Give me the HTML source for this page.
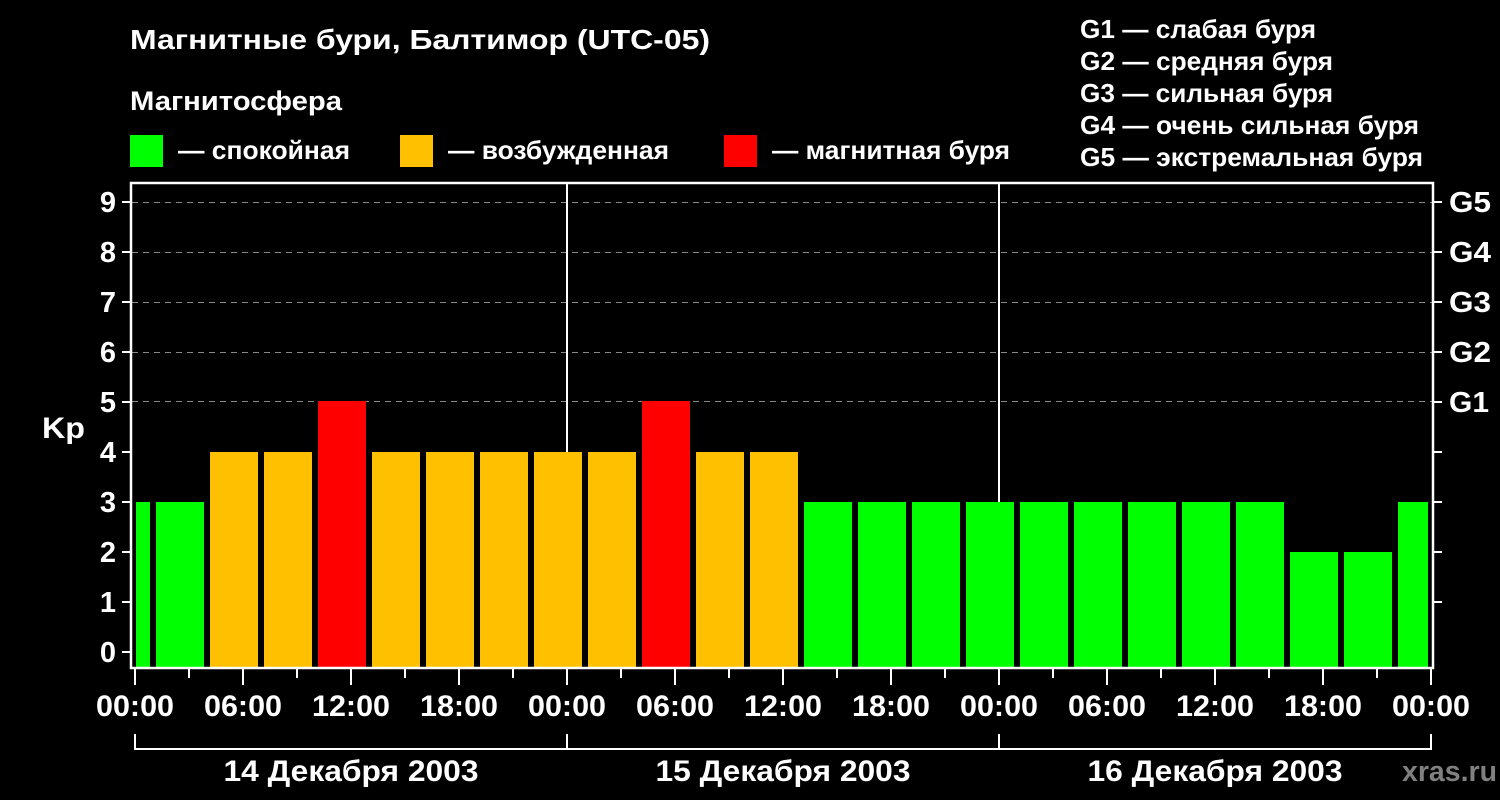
<!DOCTYPE html>
<html><head><meta charset="utf-8"><style>html,body{margin:0;padding:0;background:#000;}svg{display:block}</style></head><body>
<svg width="1500" height="800" viewBox="0 0 1500 800" xmlns="http://www.w3.org/2000/svg" font-family="Liberation Sans, Arial, sans-serif" font-weight="bold" fill="#fff">
<rect width="1500" height="800" fill="#000"/>
<text x="130" y="49" font-size="28" textLength="580" lengthAdjust="spacingAndGlyphs">Магнитные бури, Балтимор (UTC-05)</text>
<text x="130" y="110" font-size="27" textLength="212" lengthAdjust="spacingAndGlyphs">Магнитосфера</text>
<rect x="130" y="135" width="33" height="32" fill="#00ff00"/>
<text x="178" y="159" font-size="26" textLength="172" lengthAdjust="spacingAndGlyphs">— спокойная</text>
<rect x="400" y="135" width="33" height="32" fill="#ffc000"/>
<text x="448" y="159" font-size="26" textLength="221" lengthAdjust="spacingAndGlyphs">— возбужденная</text>
<rect x="724" y="135" width="33" height="32" fill="#ff0000"/>
<text x="772" y="159" font-size="26" textLength="238" lengthAdjust="spacingAndGlyphs">— магнитная буря</text>
<g font-size="26">
<text x="1080" y="38" textLength="236" lengthAdjust="spacingAndGlyphs">G1 — слабая буря</text>
<text x="1080" y="70" textLength="253" lengthAdjust="spacingAndGlyphs">G2 — средняя буря</text>
<text x="1080" y="102" textLength="253" lengthAdjust="spacingAndGlyphs">G3 — сильная буря</text>
<text x="1080" y="134" textLength="339" lengthAdjust="spacingAndGlyphs">G4 — очень сильная буря</text>
<text x="1080" y="166" textLength="343" lengthAdjust="spacingAndGlyphs">G5 — экстремальная буря</text>
</g>
<g stroke="#888" stroke-width="1" stroke-dasharray="6,5">
<line x1="132" y1="202.5" x2="1432" y2="202.5"/>
<line x1="132" y1="252.5" x2="1432" y2="252.5"/>
<line x1="132" y1="302.5" x2="1432" y2="302.5"/>
<line x1="132" y1="352.5" x2="1432" y2="352.5"/>
<line x1="132" y1="401.5" x2="1432" y2="401.5"/>
</g>
<g>
<rect x="136" y="502" width="14" height="166" fill="#00ff00"/>
<rect x="156" y="502" width="48" height="166" fill="#00ff00"/>
<rect x="210" y="452" width="48" height="216" fill="#ffc000"/>
<rect x="264" y="452" width="48" height="216" fill="#ffc000"/>
<rect x="318" y="401" width="48" height="267" fill="#ff0000"/>
<rect x="372" y="452" width="48" height="216" fill="#ffc000"/>
<rect x="426" y="452" width="48" height="216" fill="#ffc000"/>
<rect x="480" y="452" width="48" height="216" fill="#ffc000"/>
<rect x="534" y="452" width="48" height="216" fill="#ffc000"/>
<rect x="588" y="452" width="48" height="216" fill="#ffc000"/>
<rect x="642" y="401" width="48" height="267" fill="#ff0000"/>
<rect x="696" y="452" width="48" height="216" fill="#ffc000"/>
<rect x="750" y="452" width="48" height="216" fill="#ffc000"/>
<rect x="804" y="502" width="48" height="166" fill="#00ff00"/>
<rect x="858" y="502" width="48" height="166" fill="#00ff00"/>
<rect x="912" y="502" width="48" height="166" fill="#00ff00"/>
<rect x="966" y="502" width="48" height="166" fill="#00ff00"/>
<rect x="1020" y="502" width="48" height="166" fill="#00ff00"/>
<rect x="1074" y="502" width="48" height="166" fill="#00ff00"/>
<rect x="1128" y="502" width="48" height="166" fill="#00ff00"/>
<rect x="1182" y="502" width="48" height="166" fill="#00ff00"/>
<rect x="1236" y="502" width="48" height="166" fill="#00ff00"/>
<rect x="1290" y="552" width="48" height="116" fill="#00ff00"/>
<rect x="1344" y="552" width="48" height="116" fill="#00ff00"/>
<rect x="1398" y="502" width="30" height="166" fill="#00ff00"/>
</g>
<g stroke="#fff" stroke-width="2">
<line x1="567" y1="183" x2="567" y2="452"/>
<line x1="999" y1="183" x2="999" y2="502"/>
</g>
<rect x="131" y="183" width="1302" height="485" fill="none" stroke="#fff" stroke-width="2.5"/>
<g stroke="#fff" stroke-width="2">
<line x1="122" y1="652" x2="131" y2="652"/><line x1="122" y1="602" x2="131" y2="602"/>
<line x1="122" y1="552" x2="131" y2="552"/><line x1="122" y1="502" x2="131" y2="502"/>
<line x1="122" y1="452" x2="131" y2="452"/><line x1="122" y1="402" x2="131" y2="402"/>
<line x1="122" y1="352" x2="131" y2="352"/><line x1="122" y1="302" x2="131" y2="302"/>
<line x1="122" y1="252" x2="131" y2="252"/><line x1="122" y1="202" x2="131" y2="202"/>
<line x1="1433" y1="602" x2="1442" y2="602"/><line x1="1433" y1="552" x2="1442" y2="552"/>
<line x1="1433" y1="502" x2="1442" y2="502"/><line x1="1433" y1="452" x2="1442" y2="452"/>
<line x1="1433" y1="402" x2="1442" y2="402"/><line x1="1433" y1="352" x2="1442" y2="352"/>
<line x1="1433" y1="302" x2="1442" y2="302"/><line x1="1433" y1="252" x2="1442" y2="252"/>
<line x1="1433" y1="202" x2="1442" y2="202"/>
</g>
<g font-size="29" text-anchor="end">
<text x="116" y="662">0</text><text x="116" y="612">1</text><text x="116" y="562">2</text>
<text x="116" y="512">3</text><text x="116" y="462">4</text><text x="116" y="412">5</text>
<text x="116" y="362">6</text><text x="116" y="312">7</text><text x="116" y="262">8</text>
<text x="116" y="212">9</text>
</g>
<text x="42" y="438" font-size="30" textLength="43" lengthAdjust="spacingAndGlyphs">Kp</text>
<g font-size="29">
<text x="1449" y="412" textLength="40" lengthAdjust="spacingAndGlyphs">G1</text><text x="1449" y="362" textLength="42" lengthAdjust="spacingAndGlyphs">G2</text><text x="1449" y="312" textLength="42" lengthAdjust="spacingAndGlyphs">G3</text>
<text x="1449" y="262" textLength="42" lengthAdjust="spacingAndGlyphs">G4</text><text x="1449" y="212" textLength="42" lengthAdjust="spacingAndGlyphs">G5</text>
</g>
<g stroke="#fff" stroke-width="2">
<line x1="135" y1="668" x2="135" y2="685"/><line x1="189" y1="668" x2="189" y2="678"/>
<line x1="243" y1="668" x2="243" y2="685"/><line x1="297" y1="668" x2="297" y2="678"/>
<line x1="351" y1="668" x2="351" y2="685"/><line x1="405" y1="668" x2="405" y2="678"/>
<line x1="459" y1="668" x2="459" y2="685"/><line x1="513" y1="668" x2="513" y2="678"/>
<line x1="567" y1="668" x2="567" y2="685"/><line x1="621" y1="668" x2="621" y2="678"/>
<line x1="675" y1="668" x2="675" y2="685"/><line x1="729" y1="668" x2="729" y2="678"/>
<line x1="783" y1="668" x2="783" y2="685"/><line x1="837" y1="668" x2="837" y2="678"/>
<line x1="891" y1="668" x2="891" y2="685"/><line x1="945" y1="668" x2="945" y2="678"/>
<line x1="999" y1="668" x2="999" y2="685"/><line x1="1053" y1="668" x2="1053" y2="678"/>
<line x1="1107" y1="668" x2="1107" y2="685"/><line x1="1161" y1="668" x2="1161" y2="678"/>
<line x1="1215" y1="668" x2="1215" y2="685"/><line x1="1269" y1="668" x2="1269" y2="678"/>
<line x1="1323" y1="668" x2="1323" y2="685"/><line x1="1377" y1="668" x2="1377" y2="678"/>
<line x1="1431" y1="668" x2="1431" y2="685"/>
<polyline points="135,734 135,749 1431,749 1431,734" fill="none"/>
<line x1="567" y1="734" x2="567" y2="749"/><line x1="999" y1="734" x2="999" y2="749"/>
</g>
<g font-size="30" text-anchor="middle">
<text x="135" y="716" textLength="78" lengthAdjust="spacingAndGlyphs">00:00</text>
<text x="243" y="716" textLength="78" lengthAdjust="spacingAndGlyphs">06:00</text>
<text x="351" y="716" textLength="78" lengthAdjust="spacingAndGlyphs">12:00</text>
<text x="459" y="716" textLength="78" lengthAdjust="spacingAndGlyphs">18:00</text>
<text x="567" y="716" textLength="78" lengthAdjust="spacingAndGlyphs">00:00</text>
<text x="675" y="716" textLength="78" lengthAdjust="spacingAndGlyphs">06:00</text>
<text x="783" y="716" textLength="78" lengthAdjust="spacingAndGlyphs">12:00</text>
<text x="891" y="716" textLength="78" lengthAdjust="spacingAndGlyphs">18:00</text>
<text x="999" y="716" textLength="78" lengthAdjust="spacingAndGlyphs">00:00</text>
<text x="1107" y="716" textLength="78" lengthAdjust="spacingAndGlyphs">06:00</text>
<text x="1215" y="716" textLength="78" lengthAdjust="spacingAndGlyphs">12:00</text>
<text x="1323" y="716" textLength="78" lengthAdjust="spacingAndGlyphs">18:00</text>
<text x="1431" y="716" textLength="78" lengthAdjust="spacingAndGlyphs">00:00</text>
<text x="351" y="781" textLength="255" lengthAdjust="spacingAndGlyphs">14 Декабря 2003</text>
<text x="783" y="781" textLength="255" lengthAdjust="spacingAndGlyphs">15 Декабря 2003</text>
<text x="1215" y="781" textLength="255" lengthAdjust="spacingAndGlyphs">16 Декабря 2003</text>
</g>
<text x="1402" y="781" font-size="29" fill="#808080" textLength="95" lengthAdjust="spacingAndGlyphs">xras.ru</text>
</svg>
</body></html>
